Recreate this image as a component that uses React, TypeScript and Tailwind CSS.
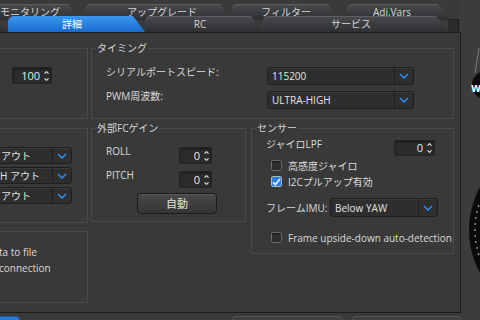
import type { ReactNode } from 'react';

function Tab({
  children,
  className = '',
  active = false,
}: {
  children?: ReactNode;
  className?: string;
  active?: boolean;
}) {
  return (
    <div
      className={`flex h-full shrink-0 items-center justify-center rounded-tl-[6px] [clip-path:polygon(0_0,calc(100%_-_12px)_0,100%_100%,0_100%)] ${
        active
          ? 'bg-linear-to-b from-[#3b97ee] to-[#176bcf] text-white'
          : 'bg-linear-to-b from-[#4a4b4e] to-[#2e2f31] text-[#d4d4d4] shadow-[inset_0_1px_0_#5d5e61]'
      } ${className}`}
    >
      {children}
    </div>
  );
}

function Chevron() {
  return (
    <svg width="10" height="6" viewBox="0 0 10 6">
      <path d="M1 1l4 4 4-4" fill="none" stroke="#2f8ff0" strokeWidth="1.5" />
    </svg>
  );
}

function Select({ value, className = '', textPad = 'pl-[4px]' }: { value: string; className?: string; textPad?: string }) {
  return (
    <div
      className={`flex shrink-0 items-center rounded-[3px] border border-[#1e1e1e] bg-[#2e2e2e] shadow-[inset_0_1px_0_#3a3a3a] ${className}`}
    >
      <span className={`flex-1 truncate whitespace-nowrap text-[#e4e4e4] ${textPad}`}>{value}</span>
      <div className="h-full w-px bg-[#202020]" />
      <div className="flex w-[18px] justify-center">
        <Chevron />
      </div>
    </div>
  );
}

function Spin({ value, className = '' }: { value: string; className?: string }) {
  return (
    <div
      className={`flex shrink-0 items-center rounded-[2px] border border-[#232323] bg-[#2b2b2b] shadow-[inset_0_1px_2px_rgba(0,0,0,0.45)] ${className}`}
    >
      <span className="flex-1 pr-[2px] text-right text-[11px] text-[#e8e8e8]">{value}</span>
      <div className="flex w-[9px] flex-col items-center gap-[4px] pr-[1px]">
        <svg width="5" height="3" viewBox="0 0 5 3">
          <path d="M0.5 2.7L2.5 0.6 4.5 2.7" fill="none" stroke="#dcdcdc" strokeWidth="1.1" />
        </svg>
        <svg width="5" height="3" viewBox="0 0 5 3">
          <path d="M0.5 0.3L2.5 2.4 4.5 0.3" fill="none" stroke="#dcdcdc" strokeWidth="1.1" />
        </svg>
      </div>
    </div>
  );
}

function Check({ checked = false }: { checked?: boolean }) {
  return checked ? (
    <div className="flex h-[11px] w-[11px] shrink-0 items-center justify-center rounded-[2px] border border-[#a9b7c8] bg-[#2b7fdc]">
      <svg width="9" height="8" viewBox="0 0 9 8">
        <path d="M1 4.2l2.3 2.4L8 1" fill="none" stroke="#f2f6ff" strokeWidth="1.6" />
      </svg>
    </div>
  ) : (
    <div className="h-[11px] w-[11px] shrink-0 rounded-[2px] border border-[#6a6a6a] bg-[#2e2e2e] shadow-[inset_0_1px_1px_rgba(0,0,0,0.5)]" />
  );
}

function Group({ title, className = '', children }: { title: string; className?: string; children: ReactNode }) {
  return (
    <fieldset className={`shrink-0 border border-[#4a4a4a] ${className}`}>
      <legend className="ml-[4px] px-[1px] leading-[14px] text-[#d6d6d6]">{title}</legend>
      {children}
    </fieldset>
  );
}

const ticks = [-24, -18, -12, -6, 0, 6, 12, 18, 24];

export default function App() {
  return (
    <div className="flex h-[320px] w-[480px] overflow-hidden bg-[#3a3a3a] font-['Open_Sans','Noto_Sans_CJK_JP',sans-serif] text-[10px] leading-[14px] text-[#dadada]">
      <div className="flex w-[461px] shrink-0 flex-col">
        {/* tabs, back row */}
        <div className="flex h-[20px] shrink-0 pt-[4px]">
          <Tab className="-ml-[20px] w-[100px]">モニタリング</Tab>
          <Tab className="ml-[5px] w-[147px] pl-[7px]">アップグレード</Tab>
          <Tab className="w-[108px]">フィルター</Tab>
          <Tab className="ml-[7px] w-[103px] pr-[13px]">Adj.Vars</Tab>
        </div>

        {/* tabs, front row */}
        <div className="relative z-10 -mt-[4px] flex h-[16px] shrink-0">
          <Tab className="-ml-[20px] w-[28px]" />
          <Tab active className="w-[137px] pr-[9px]">
            詳細
          </Tab>
          <Tab className="w-[118px] pr-[8px]">RC</Tab>
          <Tab className="w-[185px] pr-[9px]">サービス</Tab>
          <div className="mt-[3px] w-[11px] shrink-0 border-t border-r border-[#1c1c1c] bg-[#2b2b2b]" />
        </div>

        {/* panel */}
        <div className="flex h-[281px] shrink-0 border-y border-r border-[#1c1c1c] bg-[#393939]">
          {/* left column, cut off */}
          <div className="-ml-[13px] flex w-[101px] shrink-0 flex-col">
            <div className="mt-[15px] h-[71px] border border-[#4a4a4a] pt-[18px] pl-[24px]">
              <Spin value="100" className="h-[17px] w-[40px]" />
            </div>
            <div className="mt-[9px] flex h-[95px] flex-col gap-[3px] border border-[#4a4a4a] pt-[18px]">
              <Select value="アウト" textPad="pl-[12px]" className="h-[17px] w-[84px]" />
              <Select value="H アウト" textPad="pl-[11px]" className="h-[17px] w-[84px]" />
              <Select value="アウト" textPad="pl-[12px]" className="h-[17px] w-[84px]" />
            </div>
            <div className="mt-[8px] flex h-[72px] flex-col gap-[2px] border border-[#4a4a4a] pt-[13px] pl-[11px] whitespace-nowrap">
              <span>ta to file</span>
              <span>connection</span>
            </div>
          </div>

          {/* main area */}
          <div className="ml-[3px] flex w-[363px] shrink-0 flex-col">
            <Group title="タイミング" className="mt-[8px]">
              <div className="flex flex-col gap-[6px] pt-[12px] pb-[9px] pl-[14px]">
                <div className="flex h-[18px] items-start">
                  <span className="-mt-[2px] w-[161px] shrink-0">シリアルポートスピード:</span>
                  <Select value="115200" className="h-[18px] w-[147px]" />
                </div>
                <div className="flex h-[18px] items-start">
                  <span className="-mt-[2px] w-[161px] shrink-0">PWM周波数:</span>
                  <Select value="ULTRA-HIGH" className="h-[18px] w-[147px]" />
                </div>
              </div>
            </Group>

            <div className="mt-[2px] flex items-start gap-[5px]">
              <Group title="外部FCゲイン" className="w-[155px]">
                <div className="flex flex-col pt-[12px] pb-[7px]">
                  <div className="flex h-[17px] items-start pl-[14px]">
                    <span className="-mt-[3px] w-[73px] shrink-0">ROLL</span>
                    <Spin value="0" className="h-[17px] w-[33px]" />
                  </div>
                  <div className="mt-[7px] flex h-[17px] items-start pl-[14px]">
                    <span className="-mt-[3px] w-[73px] shrink-0">PITCH</span>
                    <Spin value="0" className="h-[17px] w-[33px]" />
                  </div>
                  <button className="mt-[5px] ml-[45px] flex h-[21px] w-[80px] items-center justify-center rounded-[4px] border border-[#1b1b1b] bg-linear-to-b from-[#4a4a4a] to-[#353535] text-[11px] text-[#e2e2e2] shadow-[inset_0_1px_0_#575757]">
                    自動
                  </button>
                </div>
              </Group>

              <Group title="センサー" className="w-[203px]">
                <div className="flex flex-col pt-[5px] pb-[10px]">
                  <div className="flex h-[16px] items-start pr-[18px] pl-[14px]">
                    <span className="-mt-[3px]">ジャイロLPF</span>
                    <Spin value="0" className="ml-auto h-[16px] w-[41px]" />
                  </div>
                  <div className="mt-[4px] flex h-[11px] items-center gap-[6px] pl-[19px]">
                    <Check />
                    <span>高感度ジャイロ</span>
                  </div>
                  <div className="mt-[5px] flex h-[11px] items-center gap-[6px] pl-[19px]">
                    <Check checked />
                    <span>I2Cプルアップ有効</span>
                  </div>
                  <div className="mt-[11px] flex h-[19px] items-center pl-[14px]">
                    <span className="w-[64px] shrink-0">フレームIMU:</span>
                    <Select value="Below YAW" className="h-[19px] w-[108px]" />
                  </div>
                  <div className="mt-[15px] flex h-[11px] items-center gap-[6px] pl-[19px]">
                    <Check />
                    <span className="whitespace-nowrap">Frame upside-down auto-detection</span>
                  </div>
                </div>
              </Group>
            </div>
          </div>
        </div>

        {/* bottom buttons */}
        <div className="flex h-[7px] shrink-0 pt-[3px]">
          <div className="-ml-[10px] h-[12px] w-[30px] shrink-0 rounded-tr-[4px] border border-[#1d5fa6] bg-[#2a7ad2]" />
          <div className="ml-[212px] h-[12px] w-[111px] shrink-0 rounded-t-[4px] border border-[#575757] bg-[#404040]" />
          <div className="ml-[9px] h-[12px] w-[109px] shrink-0 rounded-t-[4px] border border-[#575757] bg-[#404040]" />
        </div>
      </div>

      {/* attitude indicator, cut off */}
      <div className="w-[19px] shrink-0 bg-[#3c3c3c]">
        <svg width="19" height="320" viewBox="0 0 19 320">
          <line x1="18" y1="48" x2="14" y2="73" stroke="#8c8c8c" strokeWidth="0.8" />
          <circle cx="25" cy="85" r="14" fill="#0b0b0b" />
          <text x="10" y="92" fill="#ffffff" fontSize="9" fontWeight="700" fontFamily="DejaVu Sans">
            W
          </text>
          <circle cx="97.5" cy="230" r="89.5" fill="#0b0b0b" />
          {ticks.map((dy) => (
            <circle key={dy} cx={97.5 - Math.sqrt(83.5 * 83.5 - dy * dy)} cy={230 + dy} r="0.8" fill="#e8e8e8" />
          ))}
        </svg>
      </div>
    </div>
  );
}
